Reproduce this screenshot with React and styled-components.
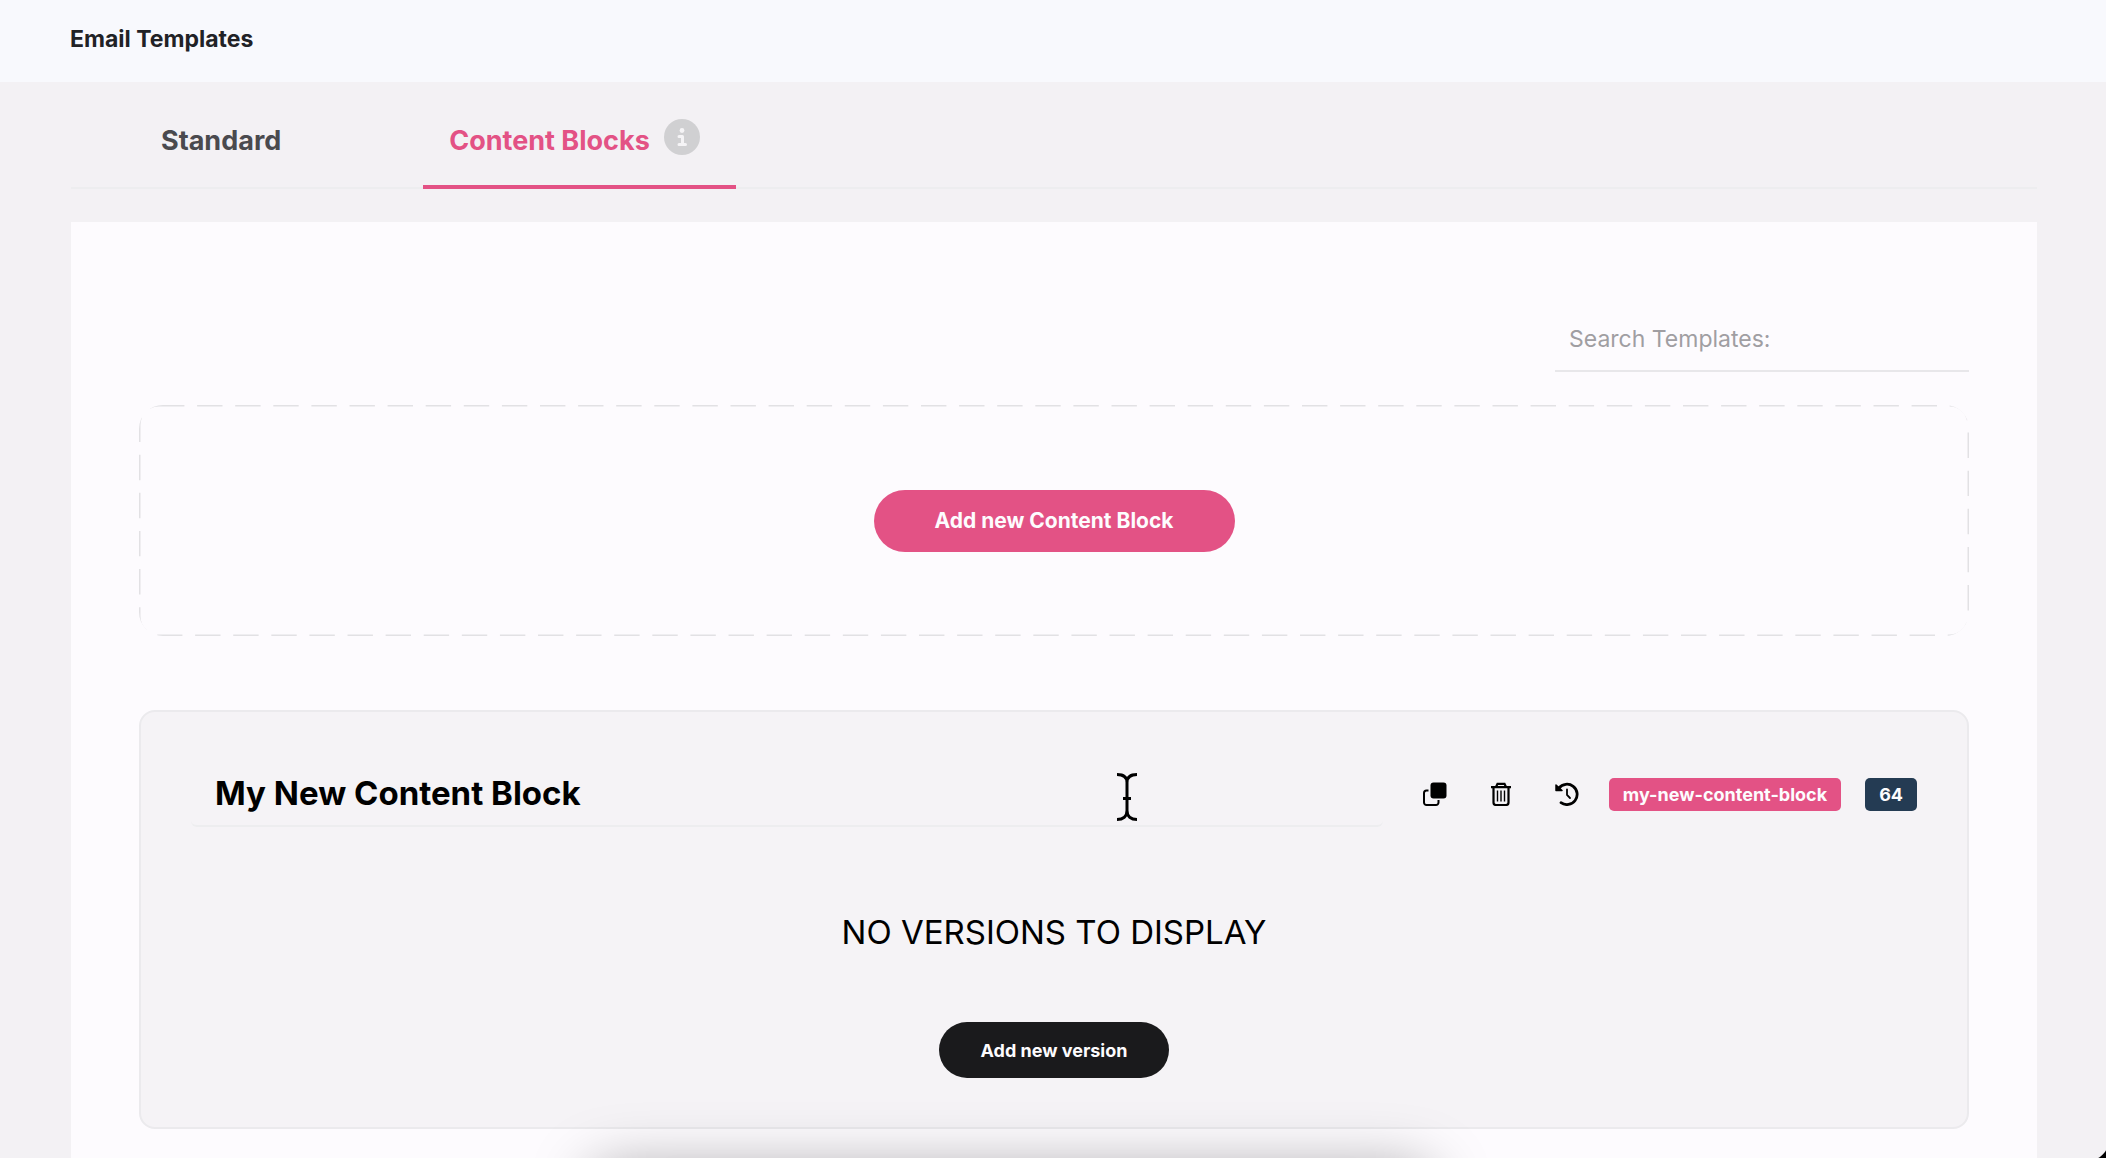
import { useState } from "react";
import styled, { createGlobalStyle } from "styled-components";

const App = () => {
  const [title, setTitle] = useState("My New Content Block");

  return (
    <Page>
      <GlobalStyle />
      <Header>
        <h1>Email Templates</h1>
      </Header>
      <Main>
        <Tabs>
          <Tab href="#standard">Standard</Tab>
          <Tab href="#content-blocks" $active>
            Content Blocks
            <InfoIcon />
          </Tab>
        </Tabs>
        <Panel>
          <Search
            type="text"
            aria-label="Search Templates"
            placeholder="Search Templates:"
          />
          <DropArea>
            <DashedOutline aria-hidden="true">
              <rect width="100%" height="100%" rx="20" />
            </DashedOutline>
            <PillButton type="button">Add new Content Block</PillButton>
          </DropArea>
          <Card>
            <CardHeader>
              <TitleInput
                type="text"
                aria-label="Content block name"
                value={title}
                onChange={(e) => setTitle(e.target.value)}
              />
              <Actions>
                <IconButton type="button" aria-label="Duplicate">
                  <CopyIcon />
                </IconButton>
                <IconButton type="button" aria-label="Delete">
                  <TrashIcon />
                </IconButton>
                <IconButton type="button" aria-label="History">
                  <HistoryIcon />
                </IconButton>
              </Actions>
              <Badges>
                <Badge>my-new-content-block</Badge>
                <Badge $dark>64</Badge>
              </Badges>
            </CardHeader>
            <Empty>NO VERSIONS TO DISPLAY</Empty>
            <PillButton type="button" $dark>
              Add new version
            </PillButton>
          </Card>
        </Panel>
      </Main>
      <TextCursor viewBox="0 0 22 50" aria-hidden="true">
        <path d="M1 2.5c6 0 10 2.5 10 8v28c0 6-4 9-10 9M21 2.5c-6 0-10 2.5-10 8v28c0 6 4 9 10 9M7 26.5h8" />
      </TextCursor>
      <BottomShadow />
      <Corner />
    </Page>
  );
};

const InfoIcon = () => (
  <svg width="36" height="36" viewBox="0 0 36 36" aria-hidden="true">
    <circle cx="18" cy="18" r="18" fill="#d0d0d2" />
    <circle cx="18" cy="11.5" r="2.4" fill="#f5f4f6" />
    <path
      d="M15 17.5h3.5v8M15 25.5h6.5"
      fill="none"
      stroke="#f5f4f6"
      strokeWidth="3"
      strokeLinecap="round"
      strokeLinejoin="round"
    />
  </svg>
);

const CopyIcon = () => (
  <svg width="24" height="24" viewBox="0 0 24 24" aria-hidden="true">
    <rect x="7.5" y="0.5" width="16" height="16" rx="3" fill="#000" />
    <path
      d="M5.5 8.5H3.5A2.5 2.5 0 0 0 1 11v9.5A2.5 2.5 0 0 0 3.5 23h9.5a2.5 2.5 0 0 0 2.5-2.5V18"
      fill="none"
      stroke="#000"
      strokeWidth="2"
    />
  </svg>
);

const TrashIcon = () => (
  <svg width="24" height="24" viewBox="0 0 24 24" aria-hidden="true">
    <g fill="none" stroke="#000" strokeWidth="2.2">
      <path d="M2 5.2h20M7 5L8.5 1.8h7L17 5M4.500 5.5v15a2.5 2.5 0 0 0 2.5 2.5h10a2.5 2.5 0 0 0 2.5-2.5v-15" />
      <path d="M8.5 8.5v11M12 8.5v11M15.5 8.5v11" strokeWidth="1.4" />
    </g>
  </svg>
);

const HistoryIcon = () => (
  <svg width="24" height="24" viewBox="0 0 24 24" aria-hidden="true">
    <g fill="none" stroke="#000" strokeWidth="2.8" strokeLinecap="round">
      <path d="M4 6A10.2 10.2 0 1 1 6 20.7" />
      <path d="M12 7.5v5.5l3 3" strokeWidth="1.8" />
    </g>
    <path
      d="M1 3v5.5h6z"
      fill="#000"
      stroke="#000"
      strokeWidth="1.5"
      strokeLinejoin="round"
    />
  </svg>
);

const GlobalStyle = createGlobalStyle`
  * {
    box-sizing: border-box;
  }

  body {
    margin: 0;
    overflow: hidden;
    font-family: Inter, "Liberation Sans", sans-serif;
    background: #f3f1f4;
  }
`;

const Page = styled.div`
  display: flex;
  flex-direction: column;
  min-height: 100vh;
`;

const Header = styled.header`
  height: 82px;
  padding: 24px 70px;
  background: #f8f9fd;

  h1 {
    margin: 0;
    font-size: 23px;
    line-height: 30px;
    font-weight: 700;
    color: #212226;
  }
`;

const Main = styled.main`
  flex: 1;
  display: flex;
  flex-direction: column;
  padding: 0 69px 0 71px;
`;

const Tabs = styled.nav`
  display: flex;
  gap: 116px;
  height: 107px;
  border-bottom: 2px solid #ededef;
`;

const Tab = styled.a`
  display: flex;
  align-items: center;
  gap: 14px;
  height: 107px;
  padding: 13px 26px 0;
  font-size: 27px;
  font-weight: 700;
  text-decoration: none;
  color: ${(props) => (props.$active ? "#e35285" : "#4a4a4e")};
  border-bottom: 4px solid
    ${(props) => (props.$active ? "#e35285" : "transparent")};

  &:first-child {
    margin-left: 64px;
  }

  &:last-child {
    padding-right: 36px;
  }

  svg {
    margin-bottom: 6px;
  }
`;

const Panel = styled.section`
  flex: 1;
  display: flex;
  flex-direction: column;
  margin-top: 33px;
  padding: 86px 68px 60px;
  background: #fdfbfe;
`;

const Search = styled.input`
  align-self: flex-end;
  width: 414px;
  height: 64px;
  padding: 0 14px;
  border: 0;
  border-bottom: 2px solid #e8e7ea;
  background: transparent;
  font-family: inherit;
  font-size: 23px;
  font-weight: 400;
  outline: none;

  &::placeholder {
    color: #a09ea2;
    opacity: 1;
  }
`;

const DropArea = styled.div`
  position: relative;
  display: flex;
  justify-content: center;
  align-items: center;
  height: 231px;
  margin-top: 33px;
`;

const DashedOutline = styled.svg`
  position: absolute;
  inset: 0;
  width: 100%;
  height: 100%;
  border-radius: 24px;

  rect {
    fill: none;
    stroke: #e2e1e4;
    stroke-width: 3px;
    stroke-dasharray: 25.4 12.7;
  }
`;

const PillButton = styled.button`
  position: relative;
  height: ${(props) => (props.$dark ? "56px" : "62px")};
  padding: ${(props) => (props.$dark ? "0 42px" : "0 61px")};
  border: 0;
  border-radius: 31px;
  background: ${(props) => (props.$dark ? "#1a1a1c" : "#e35285")};
  color: #fdfcfe;
  font-family: inherit;
  font-size: ${(props) => (props.$dark ? "18px" : "21px")};
  font-weight: 700;
  cursor: pointer;
`;

const Card = styled.article`
  display: flex;
  flex-direction: column;
  align-items: center;
  margin-top: 74px;
  padding: 49px 50px;
  border: 2px solid #ebeaed;
  border-radius: 16px;
  background: #f5f3f6;
`;

const CardHeader = styled.div`
  display: flex;
  align-items: center;
  align-self: stretch;
`;

const TitleInput = styled.input`
  flex: 1;
  min-width: 0;
  height: 66px;
  padding: 0 24px;
  border: 0;
  border-bottom: 2px solid #ededef;
  border-radius: 6px;
  background: transparent;
  color: #000;
  font-family: inherit;
  font-size: 33px;
  font-weight: 700;
  outline: none;
`;

const Actions = styled.div`
  display: flex;
  gap: 42px;
  margin: 0 30px 0 40px;
`;

const IconButton = styled.button`
  display: flex;
  padding: 0;
  border: 0;
  background: none;
  cursor: pointer;
`;

const Badges = styled.div`
  display: flex;
  gap: 24px;
`;

const Badge = styled.span`
  padding: 0 14px;
  border-radius: 5px;
  background: ${(props) => (props.$dark ? "#243b53" : "#e35285")};
  color: #fdfcfe;
  font-size: 18px;
  line-height: 33px;
  font-weight: 700;
`;

const Empty = styled.p`
  margin: 85px 0 70px;
  font-size: 33px;
  line-height: 40px;
  font-weight: 400;
  color: #000;
`;

const TextCursor = styled.svg`
  position: fixed;
  left: 1116px;
  top: 772px;
  width: 22px;
  height: 50px;
  fill: none;
  stroke: #000;
  stroke-width: 3px;
`;

const BottomShadow = styled.div`
  position: fixed;
  left: 28%;
  right: 32%;
  top: 100%;
  height: 60px;
  border-radius: 24px;
  box-shadow: 0 10px 60px rgba(0, 0, 0, 0.35);
`;

const Corner = styled.div`
  position: fixed;
  right: 0;
  bottom: 0;
  width: 20px;
  height: 20px;
  background: radial-gradient(circle at 0 0, transparent 23px, #000 24px);
`;

export default App;
